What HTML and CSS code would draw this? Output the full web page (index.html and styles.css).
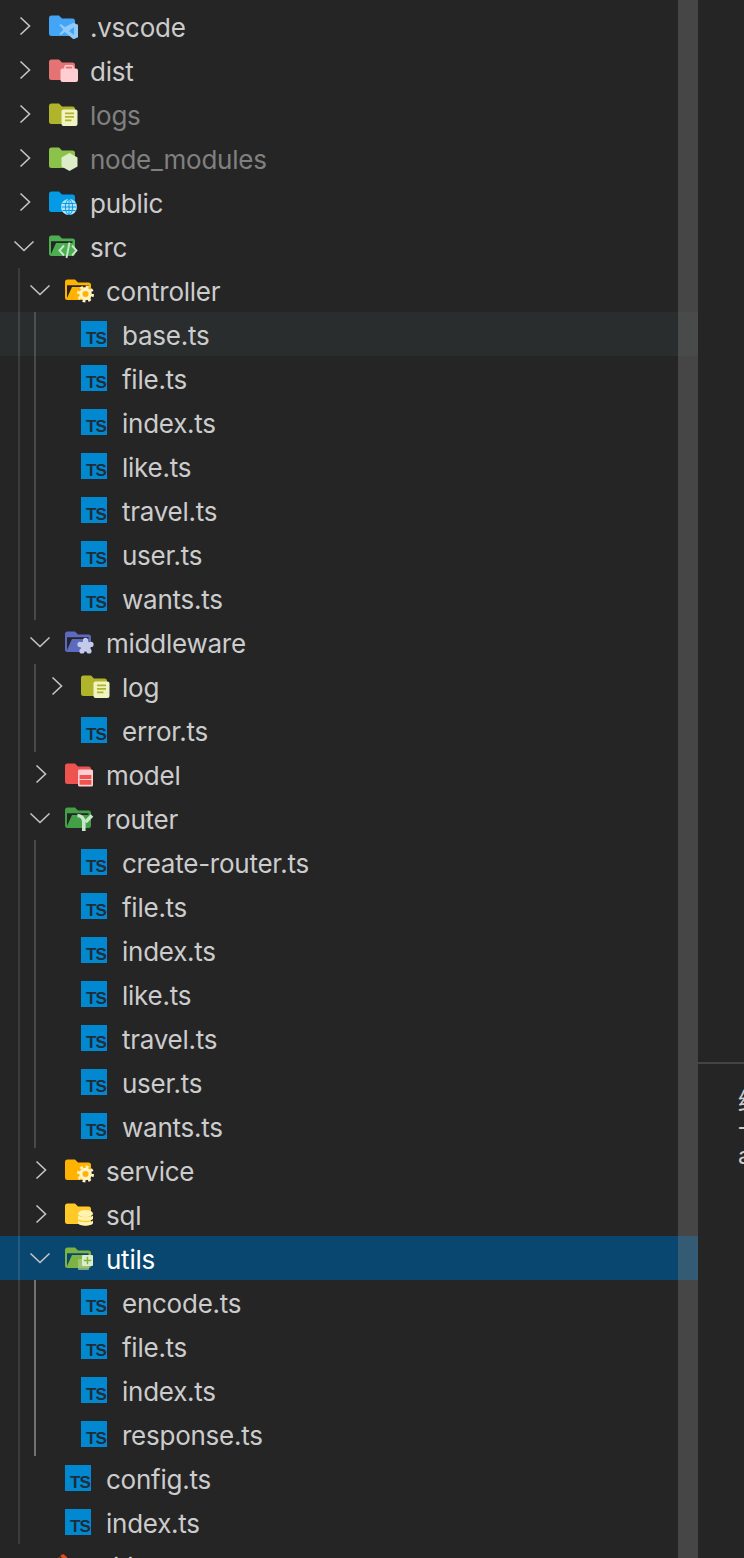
FILE: index.html
```html
<!DOCTYPE html>
<html lang="en">
<head>
<meta charset="utf-8">
<title>Explorer</title>
<link rel="stylesheet" href="styles.css">
</head>
<body>
<svg class="defs" aria-hidden="true">
  <defs>
    <path id="f-closed" d="M0 5a2.5 2.5 0 0 1 2.5-2.5H10l3 3h10.5A2.5 2.5 0 0 1 26 8v12.5a2.5 2.5 0 0 1-2.5 2.5h-21A2.5 2.5 0 0 1 0 20.5z"/>
    <path id="f-inner" d="M2 8.2H23.5V10H7L2 21z"/>
    <symbol id="gear" viewBox="0 0 30 26">
      <circle cx="20.5" cy="17" r="7" fill="none" stroke="#fff3c4" stroke-width="3" stroke-dasharray="2.75 2.75"/>
      <circle cx="20.5" cy="17" r="6.2" fill="#fff3c4"/>
      <circle cx="20.5" cy="17" r="3" fill="#ffb300"/>
    </symbol>
    <symbol id="i-vscode" viewBox="0 0 30 26">
      <use href="#f-closed" fill="#42a5f5"/>
      <path fill="#90caf9" fill-rule="evenodd" d="M24.500 9.700l4.500 2v12.600l-4.500 2-8.700-7.200-4 3-1.500-1.200 4-4.400-4-4.400 1.500-1.200 4 3zM25 14l-5 4 5 4z"/>
    </symbol>
    <symbol id="i-dist" viewBox="0 0 30 26">
      <use href="#f-closed" fill="#e57373"/>
      <path fill="none" stroke="#ffcdd2" stroke-width="1.6" d="M16 12v-1.700a1.500 1.500 0 0 1 1.500-1.500h5a1.500 1.500 0 0 1 1.500 1.500V12"/>
      <rect x="11.500" y="11.500" width="17.500" height="13.500" rx="2" fill="#ffcdd2"/>
    </symbol>
    <symbol id="i-log" viewBox="0 0 30 26">
      <use href="#f-closed" fill="#afb42b"/>
      <rect x="12.500" y="8.500" width="16" height="16.500" rx="2" fill="#f0f4c3"/>
      <path fill="#afb42b" d="M16 11.500h9v1.800h-9zM16 15h9v1.800h-9zM16 18.500h6.500v1.800H16z"/>
    </symbol>
    <symbol id="i-node" viewBox="0 0 30 26">
      <use href="#f-closed" fill="#8bc34a"/>
      <path fill="#dcedc8" d="M20.500 8l8 4.600v8.800l-8 4.600-8-4.600v-8.800z"/>
    </symbol>
    <symbol id="i-public" viewBox="0 0 30 26">
      <use href="#f-closed" fill="#039be5"/>
      <circle cx="20" cy="18" r="8" fill="#b3e5fc"/>
      <g fill="none" stroke="#039be5" stroke-width="1">
        <ellipse cx="20" cy="18" rx="3.600" ry="7.600"/>
        <path d="M20 10.500v15M12.500 18h15M13.500 14.500h13M13.500 21.500h13"/>
      </g>
    </symbol>
    <symbol id="i-src" viewBox="0 0 30 26">
      <use href="#f-closed" fill="#4caf50"/>
      <use href="#f-inner" fill="#252526"/>
      <path fill="none" stroke="#c8e6c9" stroke-width="1.900" d="M15 12.500L10.500 17.500 15 22.500M23 12.500L27.500 17.500 23 22.500M20.500 9.500L17.500 25"/>
    </symbol>
    <symbol id="i-controller" viewBox="0 0 30 26">
      <use href="#f-closed" fill="#ffb300"/>
      <use href="#f-inner" fill="#252526"/>
      <use href="#gear"/>
    </symbol>
    <symbol id="i-service" viewBox="0 0 30 26">
      <use href="#f-closed" fill="#ffb300"/>
      <use href="#gear"/>
    </symbol>
    <symbol id="i-middleware" viewBox="0 0 30 26">
      <use href="#f-closed" fill="#5c6bc0"/>
      <use href="#f-inner" fill="#252526"/>
      <g fill="#c5cae9">
        <circle cx="20.500" cy="17" r="5.200"/>
        <circle cx="20.500" cy="11.400" r="2.600"/>
        <circle cx="26" cy="15.400" r="2.600"/>
        <circle cx="24" cy="22" r="2.600"/>
        <circle cx="17" cy="22" r="2.600"/>
        <circle cx="15" cy="15.400" r="2.600"/>
      </g>
    </symbol>
    <symbol id="i-model" viewBox="0 0 30 26">
      <use href="#f-closed" fill="#ef5350"/>
      <rect x="13" y="8.500" width="15" height="17" rx="1.500" fill="#ffcdd2"/>
      <path fill="#ef5350" d="M14.600 14h11.800v4H14.600zM14.600 19h11.800v4.800H14.600z"/>
    </symbol>
    <symbol id="i-router" viewBox="0 0 30 26">
      <use href="#f-closed" fill="#43a047"/>
      <use href="#f-inner" fill="#252526"/>
      <path fill="none" stroke="#c8e6c9" stroke-width="3.600" d="M12.500 10.500c3.800 0 6.300 3 6.300 6.500v9M20.500 17l6.500-6.500"/>
    </symbol>
    <symbol id="i-sql" viewBox="0 0 30 26">
      <use href="#f-closed" fill="#ffca28"/>
      <g fill="#fff3b0">
        <ellipse cx="20.500" cy="12.500" rx="7.500" ry="3.600"/>
        <path d="M13 14.500c1.500 2.200 13.500 2.200 15 0V18c-1.500 2.400-13.500 2.400-15 0z"/>
        <path d="M13 19.500c1.500 2.200 13.500 2.200 15 0V22c-1 3.600-14 3.600-15 0z"/>
      </g>
    </symbol>
    <symbol id="i-utils" viewBox="0 0 30 26">
      <use href="#f-closed" fill="#7cb342"/>
      <use href="#f-inner" fill="#094771"/>
      <rect x="13" y="14" width="11" height="11" rx="1" fill="#a5c98a" opacity=".75"/>
      <rect x="17" y="10" width="11" height="11" rx="1" fill="#dcedc8"/>
      <path fill="#7cb342" d="M21.800 11.800h1.400v3h3v1.400h-3v3h-1.400v-3h-3v-1.400h3z"/>
    </symbol>
    <symbol id="i-git" viewBox="0 0 30 26">
      <rect x="5" y="4" width="18" height="18" rx="3" fill="#e64a19" transform="rotate(45 14 13)"/>
      <path fill="none" stroke="#252526" stroke-width="1.400" d="M10 3l6 6"/>
    </symbol>
    <symbol id="chev-r" viewBox="0 0 32 44">
      <path fill="none" stroke="#c5c5c5" stroke-width="1.600" d="M12.500 13.500L21.500 22 12.500 30.500"/>
    </symbol>
    <symbol id="chev-d" viewBox="0 0 32 44">
      <path fill="none" stroke="#c5c5c5" stroke-width="1.600" d="M6.500 17.500L16 26.500 25.500 17.500"/>
    </symbol>
  </defs>
</svg>

<main class="window">
  <aside class="explorer">
    <div class="tree">
      <div class="row l0"><svg class="chev"><use href="#chev-r"/></svg><svg class="icon"><use href="#i-vscode"/></svg><span class="name">.vscode</span></div>
      <div class="row l0"><svg class="chev"><use href="#chev-r"/></svg><svg class="icon"><use href="#i-dist"/></svg><span class="name">dist</span></div>
      <div class="row l0 dim"><svg class="chev"><use href="#chev-r"/></svg><svg class="icon"><use href="#i-log"/></svg><span class="name">logs</span></div>
      <div class="row l0 dim"><svg class="chev"><use href="#chev-r"/></svg><svg class="icon"><use href="#i-node"/></svg><span class="name">node_modules</span></div>
      <div class="row l0"><svg class="chev"><use href="#chev-r"/></svg><svg class="icon"><use href="#i-public"/></svg><span class="name">public</span></div>
      <div class="row l0"><svg class="chev"><use href="#chev-d"/></svg><svg class="icon"><use href="#i-src"/></svg><span class="name">src</span></div>

      <div class="group g0">
        <div class="row l1"><svg class="chev"><use href="#chev-d"/></svg><svg class="icon"><use href="#i-controller"/></svg><span class="name">controller</span></div>
        <div class="group g1">
          <div class="row l2 hover"><span class="ts">TS</span><span class="name">base.ts</span></div>
          <div class="row l2"><span class="ts">TS</span><span class="name">file.ts</span></div>
          <div class="row l2"><span class="ts">TS</span><span class="name">index.ts</span></div>
          <div class="row l2"><span class="ts">TS</span><span class="name">like.ts</span></div>
          <div class="row l2"><span class="ts">TS</span><span class="name">travel.ts</span></div>
          <div class="row l2"><span class="ts">TS</span><span class="name">user.ts</span></div>
          <div class="row l2"><span class="ts">TS</span><span class="name">wants.ts</span></div>
        </div>

        <div class="row l1"><svg class="chev"><use href="#chev-d"/></svg><svg class="icon"><use href="#i-middleware"/></svg><span class="name">middleware</span></div>
        <div class="group g1">
          <div class="row l2 sub"><svg class="chev"><use href="#chev-r"/></svg><svg class="icon"><use href="#i-log"/></svg><span class="name">log</span></div>
          <div class="row l2"><span class="ts">TS</span><span class="name">error.ts</span></div>
        </div>

        <div class="row l1"><svg class="chev"><use href="#chev-r"/></svg><svg class="icon"><use href="#i-model"/></svg><span class="name">model</span></div>

        <div class="row l1"><svg class="chev"><use href="#chev-d"/></svg><svg class="icon"><use href="#i-router"/></svg><span class="name">router</span></div>
        <div class="group g1">
          <div class="row l2"><span class="ts">TS</span><span class="name">create-router.ts</span></div>
          <div class="row l2"><span class="ts">TS</span><span class="name">file.ts</span></div>
          <div class="row l2"><span class="ts">TS</span><span class="name">index.ts</span></div>
          <div class="row l2"><span class="ts">TS</span><span class="name">like.ts</span></div>
          <div class="row l2"><span class="ts">TS</span><span class="name">travel.ts</span></div>
          <div class="row l2"><span class="ts">TS</span><span class="name">user.ts</span></div>
          <div class="row l2"><span class="ts">TS</span><span class="name">wants.ts</span></div>
        </div>

        <div class="row l1"><svg class="chev"><use href="#chev-r"/></svg><svg class="icon"><use href="#i-service"/></svg><span class="name">service</span></div>
        <div class="row l1"><svg class="chev"><use href="#chev-r"/></svg><svg class="icon"><use href="#i-sql"/></svg><span class="name">sql</span></div>

        <div class="row l1 selected"><svg class="chev"><use href="#chev-d"/></svg><svg class="icon"><use href="#i-utils"/></svg><span class="name">utils</span></div>
        <div class="group g1 active">
          <div class="row l2"><span class="ts">TS</span><span class="name">encode.ts</span></div>
          <div class="row l2"><span class="ts">TS</span><span class="name">file.ts</span></div>
          <div class="row l2"><span class="ts">TS</span><span class="name">index.ts</span></div>
          <div class="row l2"><span class="ts">TS</span><span class="name">response.ts</span></div>
        </div>

        <div class="row l1 file"><span class="ts">TS</span><span class="name">config.ts</span></div>
        <div class="row l1 file"><span class="ts">TS</span><span class="name">index.ts</span></div>
      </div>

      <div class="row l0 file"><svg class="icon"><use href="#i-git"/></svg><span class="name">.gitignore</span></div>
    </div>
    <div class="scrollbar"></div>
  </aside>

  <section class="side">
    <div class="editor"></div>
    <div class="terminal">
      <div class="line">终端</div>
      <div class="line">一</div>
      <div class="line">a</div>
    </div>
  </section>
</main>
</body>
</html>
```

FILE: styles.css
```css
html, body {
  margin: 0;
  padding: 0;
  height: 1558px;
  overflow: hidden;
  background: #252526;
}

.defs {
  position: absolute;
  width: 0;
  height: 0;
}

.window {
  display: flex;
  height: 1558px;
  overflow: hidden;
  font-family: Inter, "Noto Sans CJK SC", sans-serif;
  color: #cccccc;
}

.explorer {
  position: relative;
  flex: 0 0 698px;
  height: 1558px;
  overflow: hidden;
}

.tree {
  padding-top: 4px;
}

.scrollbar {
  position: absolute;
  top: 0;
  right: 0;
  bottom: 0;
  width: 20px;
  background: rgba(121, 121, 121, 0.4);
}

.row {
  display: flex;
  align-items: center;
  height: 44px;
  font-size: 26px;
  white-space: nowrap;
}

.name {
  padding-top: 2px;
  letter-spacing: -0.25px;
}

.row.l0 { padding-left: 8px; }
.row.l1 { padding-left: 24px; }
.row.l2 { padding-left: 81px; }
.row.l2.sub { padding-left: 40px; }
.row.l1.file { padding-left: 65px; }
.row.l0.file { padding-left: 49px; }

.row.dim .name { color: #808080; }
.row.hover { background: #2a2d2e; }
.row.selected { background: #094771; }
.row.selected .name { color: #ffffff; }

.chev {
  flex: none;
  width: 32px;
  height: 44px;
  margin-right: 9px;
}

.icon {
  flex: none;
  width: 30px;
  height: 26px;
  margin-right: 11px;
}

.ts {
  flex: none;
  display: flex;
  align-items: flex-end;
  justify-content: flex-end;
  box-sizing: border-box;
  width: 26px;
  height: 26px;
  margin-right: 15px;
  padding: 0 1px 0 0;
  background: #0288d1;
  color: #1f2d38;
  font-family: "Liberation Sans", sans-serif;
  font-size: 17px;
  font-weight: 700;
  line-height: 16px;
  letter-spacing: -0.9px;
}

.group {
  position: relative;
}

.group::before {
  content: "";
  position: absolute;
  top: 0;
  bottom: 0;
  width: 2px;
  z-index: 1;
}

.g0::before {
  left: 18px;
  background: rgba(255, 255, 255, 0.11);
}

.g1::before {
  left: 34px;
  background: rgba(255, 255, 255, 0.17);
}

.g1.active::before {
  background: rgba(255, 255, 255, 0.35);
}

.side {
  flex: 1;
  min-width: 0;
  overflow: hidden;
}

.editor {
  height: 1062px;
  border-bottom: 2px solid #444444;
}

.terminal {
  padding: 24px 0 0 40px;
  font-size: 24px;
  line-height: 27px;
  color: #cccccc;
}

.line {
  white-space: nowrap;
}
```
